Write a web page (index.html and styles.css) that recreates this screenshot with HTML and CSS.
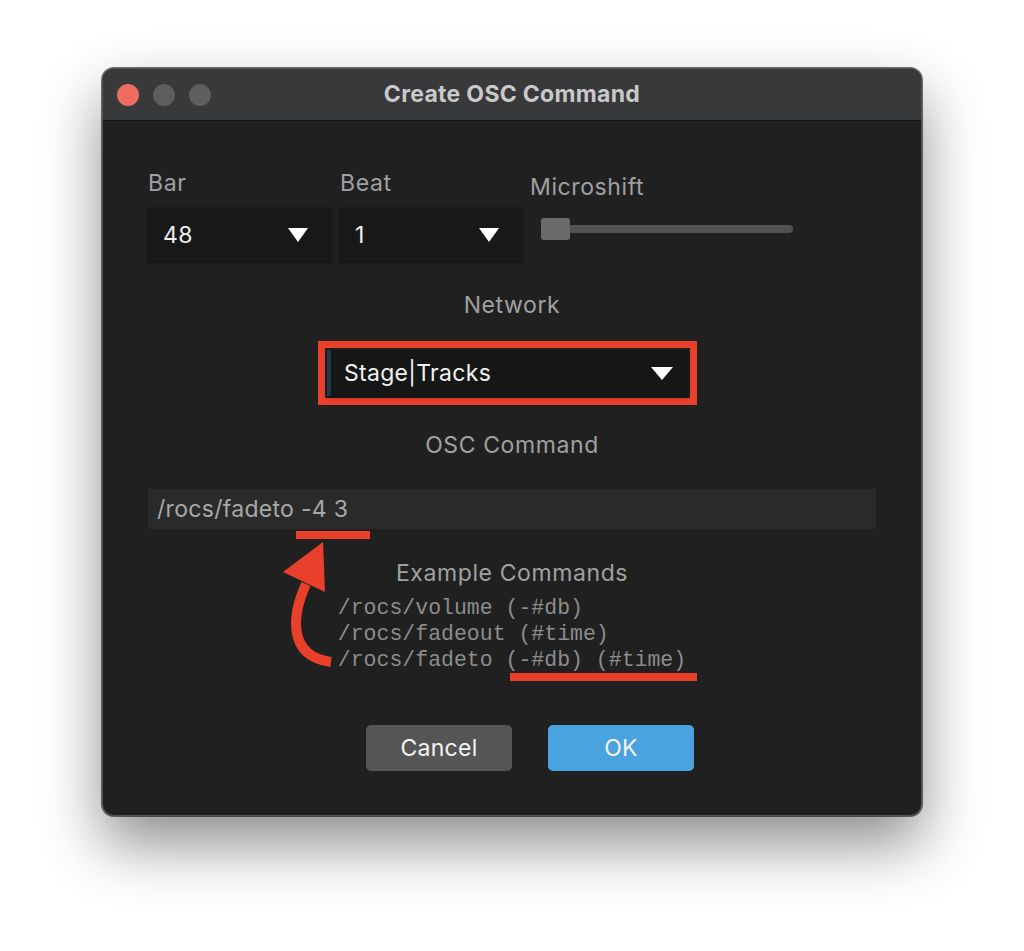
FILE: index.html
```html
<!DOCTYPE html>
<html lang="en">
<head>
    <meta charset="UTF-8">
    <title>Create OSC Command</title>
    <link rel="stylesheet" href="styles.css">
</head>
<body>
    <div class="window">
        <div class="titlebar">
            <div class="lights">
                <span class="light light-close"></span>
                <span class="light"></span>
                <span class="light"></span>
            </div>
            <div class="title">Create OSC Command</div>
        </div>

        <div class="content">
            <div class="top-row">
                <div class="field field-bar">
                    <div class="label">Bar</div>
                    <div class="select select-small">
                        <span class="select-value">48</span>
                        <span class="caret"></span>
                    </div>
                </div>
                <div class="field field-beat">
                    <div class="label">Beat</div>
                    <div class="select select-small">
                        <span class="select-value">1</span>
                        <span class="caret"></span>
                    </div>
                </div>
                <div class="field field-shift">
                    <div class="label">Microshift</div>
                    <div class="slider">
                        <div class="slider-track">
                            <div class="slider-thumb"></div>
                        </div>
                    </div>
                </div>
            </div>

            <div class="label label-center label-network">Network</div>
            <div class="highlight-box">
                <div class="select select-network">
                    <span class="select-value">Stage|Tracks</span>
                    <span class="caret caret-wide"></span>
                </div>
            </div>

            <div class="label label-center label-osc">OSC Command</div>
            <div class="command-input">
                <span class="command-text">/rocs/fadeto -4 3</span>
                <span class="mark mark-input"></span>
            </div>

            <div class="label label-center label-examples">Example Commands</div>
            <div class="examples">
                <div class="examples-list">
                    <div class="example">/rocs/volume (-#db)</div>
                    <div class="example">/rocs/fadeout (#time)</div>
                    <div class="example">/rocs/fadeto (-#db) (#time)</div>
                    <span class="mark mark-example"></span>
                </div>
            </div>

            <div class="buttons">
                <button class="button button-cancel">Cancel</button>
                <button class="button button-ok">OK</button>
            </div>
        </div>

        <svg class="annotation" viewBox="102 68 820 748" width="820" height="748">
            <path d="M306 584 C292 615, 287 656, 331 662" fill="none" stroke="#e8402a" stroke-width="10"/>
            <polygon points="323,542 283,572 325,592" fill="#e8402a"/>
        </svg>
    </div>
</body>
</html>
```

FILE: styles.css
```css
body {
    margin: 0;
    padding: 68px 0 0 102px;
    background-color: #ffffff;
    font-family: Inter, "Noto Sans", sans-serif;
    height: 951px;
    box-sizing: border-box;
    overflow: hidden;
}

.window {
    position: relative;
    width: 820px;
    height: 748px;
    box-sizing: border-box;
    background-color: #202020;
    border: 1px solid #545556;
    border-radius: 12px;
    box-shadow: 0 0 0 1px rgba(0, 0, 0, 0.55), 0 28px 60px rgba(0, 0, 0, 0.45);
    overflow: hidden;
}

.titlebar {
    position: relative;
    height: 51px;
    background-color: #38393b;
    border-bottom: 1px solid #141414;
    display: flex;
    align-items: center;
    justify-content: center;
}

.lights {
    position: absolute;
    left: 14px;
    top: 15px;
    display: flex;
    gap: 14px;
}

.light {
    width: 22px;
    height: 22px;
    border-radius: 50%;
    background-color: #5d5e60;
}

.light-close {
    background-color: #ee6b5f;
}

.title {
    color: #c9c9c9;
    font-size: 23px;
    font-weight: 700;
    letter-spacing: 0.3px;
    margin-top: -2px;
}

.content {
    padding: 49px 45px 0 45px;
    display: flex;
    flex-direction: column;
}

.label {
    color: #a0a0a0;
    font-size: 23px;
    letter-spacing: 0.6px;
    line-height: 26px;
}

.label-center {
    text-align: center;
}

.top-row {
    display: flex;
    gap: 9px;
}

.field .label {
    margin-bottom: 12px;
}

.field-bar .select {
    width: 183px;
}

.field-beat .select {
    width: 182px;
}

.field-shift {
    padding-top: 4px;
}

.field-shift .label {
    margin: 0 0 0 -1px;
}

.select {
    display: flex;
    align-items: center;
    justify-content: space-between;
    box-sizing: border-box;
    background-color: #181818;
    box-shadow: 0 1px 3px rgba(0, 0, 0, 0.6);
    color: #eeeeee;
    font-size: 23px;
    letter-spacing: 0.3px;
}

.select-small {
    height: 53px;
    padding: 0 23px 0 15px;
}

.caret {
    width: 0;
    height: 0;
    border-left: 10px solid transparent;
    border-right: 10px solid transparent;
    border-top: 14px solid #ffffff;
}

.caret-wide {
    border-left-width: 11px;
    border-right-width: 11px;
    border-top-width: 13px;
}

.slider {
    height: 58px;
    display: flex;
    align-items: center;
    padding-left: 11px;
}

.slider-track {
    position: relative;
    width: 251px;
    height: 8px;
    border-radius: 4px;
    background-color: #525252;
}

.slider-thumb {
    position: absolute;
    left: -1px;
    top: -7px;
    width: 29px;
    height: 22px;
    border-radius: 3px;
    background-color: #6a6a6a;
}

.label-network {
    margin-top: 31px;
}

.highlight-box {
    align-self: flex-start;
    margin: 23px 0 0 170px;
    width: 379px;
    height: 64px;
    box-sizing: border-box;
    border: 7px solid #e8402a;
    padding: 2px;
}

.select-network {
    height: 46px;
    padding: 0 15px 0 13px;
    border-left: 4px solid #1d3a4a;
    background-color: #161616;
}

.select-network .select-value {
    color: #f0f0f0;
}

.label-osc {
    margin-top: 27px;
}

.command-input {
    position: relative;
    margin-top: 31px;
    height: 40px;
    display: flex;
    align-items: center;
    padding-left: 9px;
    background-color: #2a2a2a;
}

.command-text {
    color: #a8a8a8;
    font-size: 23px;
    letter-spacing: 0.3px;
}

.mark {
    position: absolute;
    height: 8px;
    background-color: #e8402a;
}

.mark-input {
    left: 148px;
    top: 42px;
    width: 74px;
}

.label-examples {
    margin-top: 31px;
}

.examples {
    margin-top: 9px;
    display: flex;
    justify-content: center;
}

.examples-list {
    position: relative;
    font-family: "Liberation Mono", "DejaVu Sans Mono", monospace;
    font-size: 21.5px;
    line-height: 26px;
    color: #8c8c8c;
}

.example {
    white-space: pre;
}

.mark-example {
    left: 172px;
    top: 78px;
    width: 187px;
}

.buttons {
    margin-top: 52px;
    display: flex;
    justify-content: center;
    gap: 36px;
    padding-left: 36px;
}

.button {
    width: 146px;
    height: 46px;
    border: none;
    border-radius: 5px;
    font-family: Inter, "Noto Sans", sans-serif;
    font-size: 23px;
    letter-spacing: 0.3px;
    color: #f4f4f4;
}

.button-cancel {
    background-color: #555555;
}

.button-ok {
    background-color: #4aa3de;
}

.annotation {
    position: absolute;
    left: -1px;
    top: -1px;
    pointer-events: none;
}
```
